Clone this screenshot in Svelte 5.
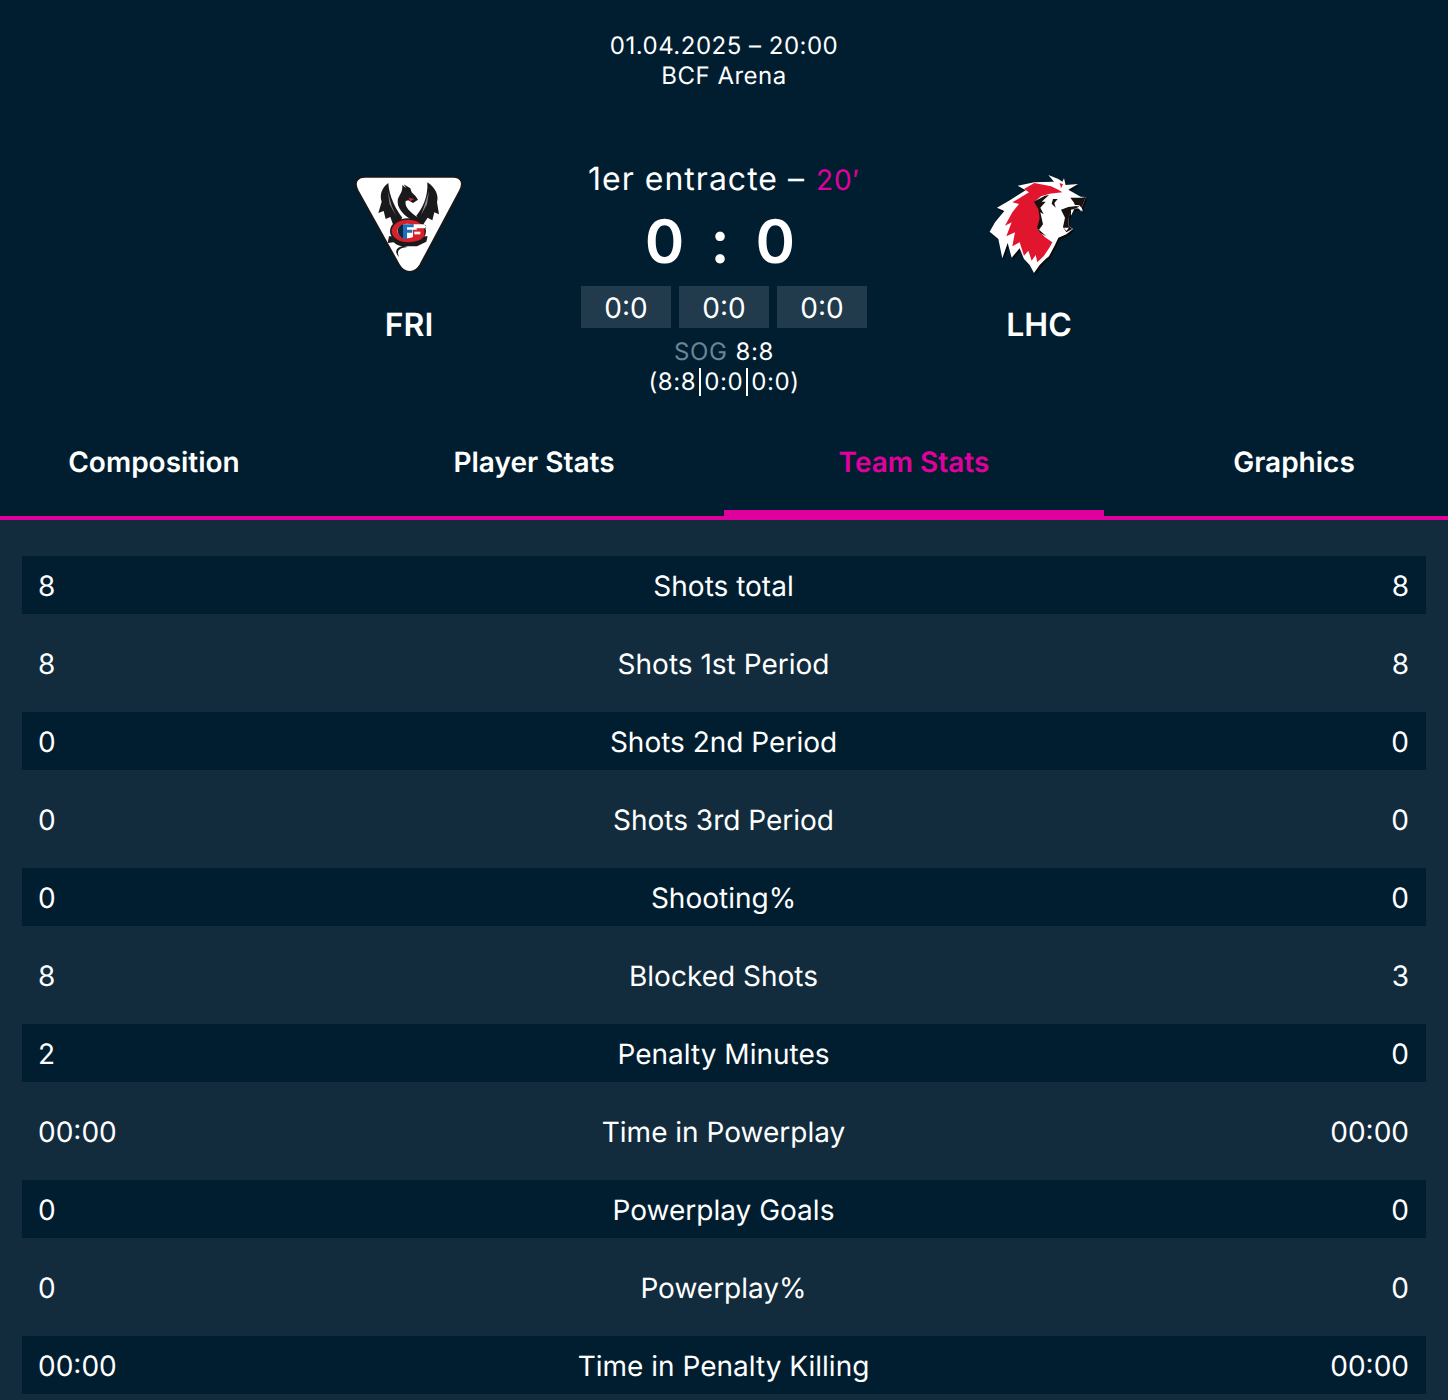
<script>
  const rows = [
    ['8', 'Shots total', '8'],
    ['8', 'Shots 1st Period', '8'],
    ['0', 'Shots 2nd Period', '0'],
    ['0', 'Shots 3rd Period', '0'],
    ['0', 'Shooting%', '0'],
    ['8', 'Blocked Shots', '3'],
    ['2', 'Penalty Minutes', '0'],
    ['00:00', 'Time in Powerplay', '00:00'],
    ['0', 'Powerplay Goals', '0'],
    ['0', 'Powerplay%', '0'],
    ['00:00', 'Time in Penalty Killing', '00:00']
  ];
  const tabs = ['Composition', 'Player Stats', 'Team Stats', 'Graphics'];
</script>

<div class="page">
  <header class="head">
    <div class="meta">
      <div>01.04.2025 – 20:00</div>
      <div>BCF Arena</div>
    </div>
    <div class="match">
      <div class="team">
        <svg class="logo" viewBox="0 0 420 390" aria-hidden="true">
          <path d="M78 53H342C366 53 376 70 363 95L244 318C228 346 196 346 180 318L56 95C43 70 54 53 78 53Z" fill="#fff" stroke="#16181a" stroke-width="6"/>
          <path d="M148 72C126 88 122 110 128 128L118 162L134 156L140 180L154 174L164 202L178 192L190 176C170 150 150 112 148 72Z" fill="#1a1a1c"/>
          <path d="M265 70C290 86 300 110 294 130L300 166L286 160L280 184L266 176L254 194L238 182L232 170C250 150 268 112 265 70Z" fill="#1a1a1c"/>
          <path d="M146 96L158 140L172 172L152 136ZM270 96L256 140L246 168L264 136Z" fill="#8c8c90"/>
          <path d="M190 78L202 88L194 76L214 88L218 100L230 112L237 122L222 132L208 124L200 126C196 144 212 158 240 178L262 202L236 192C206 178 176 156 176 128C176 110 192 104 190 78Z" fill="#1a1a1c"/>
          <path d="M208 116L226 120L214 127Z" fill="#d6293a"/>
          <path d="M150 232L146 252L164 250C176 262 192 264 208 262L234 262L262 248L266 232Z" fill="#1a1a1c"/>
          <path d="M194 260C172 264 164 278 180 294C172 274 180 268 204 264Z" fill="#1a1a1c"/>
          <ellipse cx="207" cy="216" rx="54" ry="38" fill="#1a1a1c"/>
          <ellipse cx="207" cy="216" rx="49" ry="34" fill="#d8202c"/>
          <ellipse cx="205" cy="216" rx="30" ry="22" fill="#fff"/>
          <path d="M222 196H258V208H226Z" fill="#fff"/>
          <path d="M222 212H256V230C246 246 228 248 214 246L222 236Z" fill="#d8202c"/>
          <path d="M226 218H244V226H226Z" fill="#fff"/>
          <path d="M176 216C176 206 184 198 192 196V238C184 234 176 226 176 216Z" fill="#10263c"/>
          <path d="M192 196H224V205H204V212H220V221H204V240H192Z" fill="#1c6fb8"/>
        </svg>
        <div class="abbr">FRI</div>
      </div>
      <div class="center">
        <div class="status">1er entracte – <span class="pink">20′</span></div>
        <div class="score"><span>0</span><span>:</span><span>0</span></div>
        <div class="periods">
          <div class="period">0:0</div>
          <div class="period">0:0</div>
          <div class="period">0:0</div>
        </div>
        <div class="sog"><span class="muted">SOG</span> 8:8</div>
        <div class="sog-detail">(8:8<i></i>0:0<i></i>0:0)</div>
      </div>
      <div class="team">
        <svg class="logo" viewBox="0 0 420 390" aria-hidden="true">
          <path d="M242 54L272 66L284 74L289 64L294 84L331 81L302 98L339 119L354 120L342 152L346 164L334 154L316 156L304 176L302 206L316 216L296 232L272 242L262 264L244 298L234 306L216 324L199 348L186 324L169 306L156 274L132 302L120 258L104 304L92 246L66 224L82 196L110 162L88 152L129 128L174 100L150 86L200 76L259 74Z" fill="#0c0a0a"/>
          <path d="M238 48L268 60L280 68L285 58L290 78L327 75L298 92L335 113L350 114L338 146L342 158L330 148L312 150L300 170L298 200L312 210L292 226L268 236L258 258L240 292L230 300L212 318L195 342L182 318L165 300L152 268L128 296L116 252L100 298L88 240L62 218L78 190L106 156L84 146L125 122L170 94L146 80L196 70L255 68Z" fill="#fff"/>
          <path d="M272 72L282 76L276 88Z" fill="#e1152e"/>
          <path d="M196 72L246 82L268 92L280 100L242 104L216 112L195 130L210 148L214 180L205 210L228 235L250 250L242 265L225 290L205 310L200 288L188 305L178 275L165 290L152 250L130 262L138 220L112 232L128 190L108 200L130 160L150 135L130 130L180 100L165 90Z" fill="#e1152e"/>
          <path d="M194 128L228 110L240 108L218 128L230 128L214 146L224 166L214 160L222 196L210 212L232 232L214 222L204 208L212 178L208 150Z" fill="#17110f"/>
          <path d="M252 120L266 120L256 132L260 146L248 134Z" fill="#17110f"/>
          <path d="M304 116L336 116L350 114L338 146L330 138L318 138L314 130Z" fill="#17110f"/>
          <path d="M276 152L298 144L330 140L328 146L314 150L300 170L298 200L310 210L292 220L282 204L288 176Z" fill="#17110f"/>
          <path d="M322 142L334 146L338 158L330 150ZM306 152L316 150L306 170ZM284 206L300 206L292 216Z" fill="#fff"/>
        </svg>
        <div class="abbr">LHC</div>
      </div>
    </div>
  </header>

  <nav class="tabs">
    {#each tabs as tab, i}
      <div class="tab" class:active={i === 2}>{tab}</div>
    {/each}
  </nav>

  <main class="stats">
    {#each rows as row}
      <div class="row">
        <div class="val">{row[0]}</div>
        <div class="name">{row[1]}</div>
        <div class="val right">{row[2]}</div>
      </div>
    {/each}
  </main>
</div>

<style>
  :global(body) {
    background: #122c3d;
  }
  .page {
    font-family: Inter, "Liberation Sans", sans-serif;
    text-rendering: geometricPrecision;
    color: #fff;
    height: 1400px;
    overflow: hidden;
    background: #122c3d;
  }
  .head {
    background: #001e2f;
    padding-top: 31px;
    height: 400px;
    box-sizing: border-box;
  }
  .meta {
    text-align: center;
    font-size: 24px;
    line-height: 30px;
    letter-spacing: 0.5px;
  }
  .match {
    margin-top: 68px;
    display: flex;
    justify-content: center;
  }
  .team {
    width: 200px;
    display: flex;
    flex-direction: column;
    align-items: center;
  }
  .logo {
    width: 140px;
    height: 130px;
    display: block;
  }
  .abbr {
    font-size: 32px;
    font-weight: 600;
    line-height: 40px;
    margin-top: 16px;
  }
  .center {
    width: 430px;
    display: flex;
    flex-direction: column;
    align-items: center;
  }
  .status {
    font-size: 32px;
    line-height: 40px;
    letter-spacing: 1px;
  }
  .pink {
    color: #e0009e;
    font-size: 28px;
    margin-left: 1px;
  }
  .score {
    margin-top: 4px;
    margin-left: -8px;
    height: 76px;
    display: flex;
    gap: 26px;
    font-size: 60px;
    line-height: 76px;
    font-weight: 600;
  }
  .periods {
    margin-top: 6px;
    display: flex;
    gap: 8px;
  }
  .period {
    width: 90px;
    height: 42px;
    background: #213a4c;
    text-align: center;
    font-size: 28px;
    line-height: 44px;
  }
  .sog,
  .sog-detail {
    font-size: 24px;
    line-height: 30px;
    letter-spacing: 0.6px;
    display: flex;
    align-items: center;
    gap: 8px;
  }
  .sog {
    margin-top: 9px;
  }
  .sog-detail {
    gap: 0;
  }
  .sog-detail i {
    display: block;
    width: 2px;
    height: 28px;
    background: #fff;
    margin: 0 3px;
  }
  .muted {
    color: #6a8599;
  }
  .tabs {
    height: 120px;
    box-sizing: border-box;
    background: #001e2f;
    border-bottom: 4px solid #e0009e;
    display: flex;
    justify-content: center;
    overflow: hidden;
  }
  .tab {
    flex: 0 0 380px;
    height: 116px;
    box-sizing: border-box;
    padding-top: 42px;
    text-align: center;
    font-size: 28px;
    font-weight: 600;
    line-height: 40px;
  }
  .tab.active {
    color: #e0009e;
    border-bottom: 6px solid #e0009e;
  }
  .stats {
    padding: 36px 22px 0;
    display: flex;
    flex-direction: column;
    gap: 20px;
  }
  .row {
    height: 58px;
    box-sizing: border-box;
    display: grid;
    grid-template-columns: 1fr auto 1fr;
    align-items: center;
    padding: 2px 17px 0 16px;
    font-size: 28px;
    line-height: 56px;
  }
  .row:nth-child(odd) {
    background: #001e2f;
  }
  .right {
    text-align: right;
  }
</style>
